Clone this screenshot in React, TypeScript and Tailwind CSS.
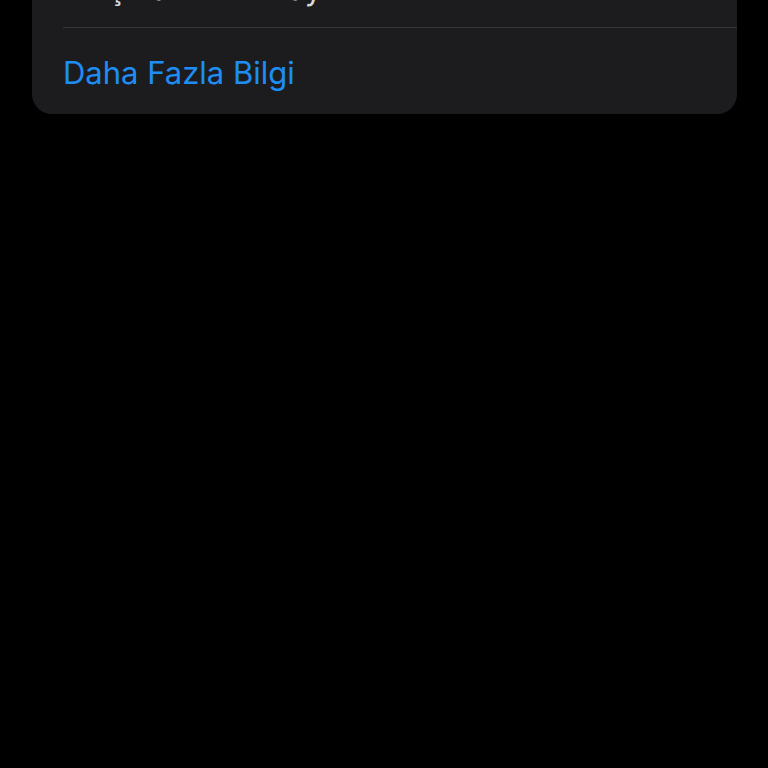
export default function App() {
    return (
        <main
            className="min-h-screen bg-black pl-[32px] pr-[31px] overflow-hidden"
            style={{ fontFamily: "Inter, 'Noto Sans', sans-serif" }}
        >
            <section className="-mt-[47px] rounded-[20px] bg-[#1c1c1e] pl-[31px]">
                <div className="h-[75px] flex items-center border-b border-[#38383a]">
                    <span className="text-[31px] leading-[38px] text-[#d8d8dc] mb-[2px]">
                        Bitiş Tarihi: 9 Mayıs 2024
                    </span>
                </div>
                <div className="h-[86px] flex items-center">
                    <button className="text-[31px] leading-[38px] text-[#1e8ef5] pt-[4px]">
                        Daha Fazla Bilgi
                    </button>
                </div>
            </section>
        </main>
    );
}
